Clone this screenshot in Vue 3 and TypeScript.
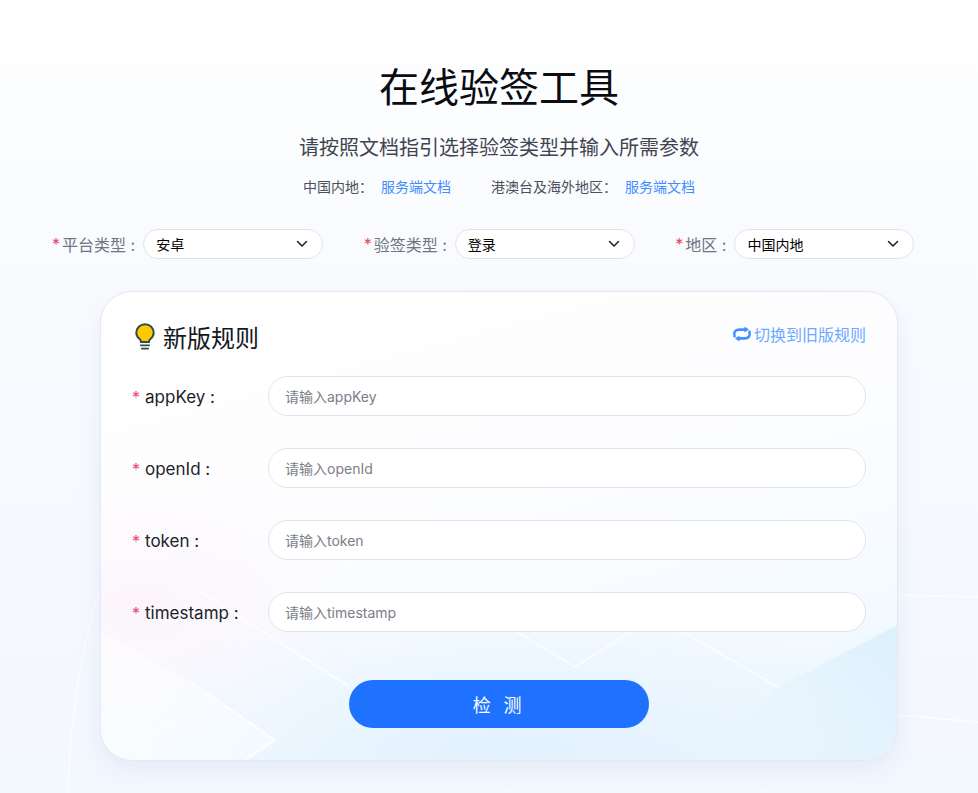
<script setup lang="ts">
const filters = [
  { label: '平台类型', value: '安卓' },
  { label: '验签类型', value: '登录' },
  { label: '地区', value: '中国内地' },
]
const fields = ['appKey', 'openId', 'token', 'timestamp']
</script>

<template>
  <div class="page">
    <svg class="page-deco" width="978" height="793" viewBox="0 0 978 793" aria-hidden="true">
      <path d="M68 793 C70 720 82 640 100 590" fill="none" stroke="#fff" stroke-width="1" opacity="0.8" />
      <path d="M898 595 L978 597" fill="none" stroke="#fff" stroke-width="1.5" opacity="0.7" />
      <path d="M898 715 L978 722" fill="none" stroke="#fff" stroke-width="1.5" opacity="0.7" />
    </svg>
    <div class="inner">
      <h1 class="title">在线验签工具</h1>
      <p class="subtitle">请按照文档指引选择验签类型并输入所需参数</p>
      <div class="docs">
        <span class="doc"><span class="doc-label">中国内地：</span><a class="doc-link">服务端文档</a></span>
        <span class="doc"><span class="doc-label">港澳台及海外地区：</span><a class="doc-link">服务端文档</a></span>
      </div>

      <div class="filters">
        <div v-for="f in filters" :key="f.label" class="filter">
          <span class="star">*</span>
          <span class="filter-label">{{ f.label }} :</span>
          <div class="select">
            <span>{{ f.value }}</span>
            <svg width="12" height="8" viewBox="0 0 12 8" aria-hidden="true">
              <path d="M1.5 1.5 L6 6 L10.5 1.5" fill="none" stroke="#1a1f2e" stroke-width="1.5" stroke-linecap="round" stroke-linejoin="round" />
            </svg>
          </div>
        </div>
      </div>

      <section class="card">
        <svg class="card-deco" width="798" height="470" viewBox="0 0 798 470" aria-hidden="true">
          <defs>
            <linearGradient id="corner" x1="1" y1="0.2" x2="0.1" y2="1">
              <stop offset="0" stop-color="#dcf0fd" stop-opacity="0.95" />
              <stop offset="1" stop-color="#e6f3fe" stop-opacity="0" />
            </linearGradient>
          </defs>
          <polygon points="678,396 798,334 798,470 610,470" fill="url(#corner)" />
          <polygon points="0,340 90,391 175,449 145,470 0,470" fill="#ffffff" opacity="0.4" />
          <g fill="none" stroke="#fff" stroke-linejoin="round">
            <path d="M97 299 L250 396" stroke-width="1.5" opacity="0.8" />
            <path d="M90 391 L175 449 L145 469" stroke-width="2" opacity="0.8" />
            <path d="M417 341 L475 376 L530 341" stroke-width="1.5" opacity="0.7" />
            <path d="M583 341 L678 396" stroke-width="1.5" opacity="0.7" />
          </g>
        </svg>
        <header class="card-head">
          <h2 class="card-title">
            <svg width="20" height="27" viewBox="0 0 20 27" aria-hidden="true">
              <path d="M10 1.2 C5 1.2 1.3 5 1.3 9.7 C1.3 12.6 2.8 14.6 4.6 16.1 C5.5 16.9 6 17.8 6 19 L14 19 C14 17.8 14.5 16.9 15.4 16.1 C17.2 14.6 18.7 12.6 18.7 9.7 C18.7 5 15 1.2 10 1.2 Z" fill="#ffc800" stroke="#2f5148" stroke-width="2" />
              <path d="M5.8 22.3 H14.2 M6.8 25.6 H13.2" stroke="#2f5148" stroke-width="1.7" stroke-linecap="round" />
            </svg>
            <span>新版规则</span>
          </h2>
          <a class="switch">
            <svg width="20" height="16" viewBox="0 0 20 16" aria-hidden="true">
              <path d="M2.6 10.2 C1.2 6.6 3.4 3.6 7 3.6 H13.5" fill="none" stroke="#3f92ff" stroke-width="2.6" stroke-linecap="round" />
              <path d="M17.4 5.8 C18.8 9.4 16.6 12.4 13 12.4 H6.5" fill="none" stroke="#3f92ff" stroke-width="2.6" stroke-linecap="round" />
              <path d="M12.5 0.6 L17 3.6 L12.5 6.6 Z M7.5 9.4 L3 12.4 L7.5 15.4 Z" fill="#3f92ff" />
            </svg>
            <span>切换到旧版规则</span>
          </a>
        </header>

        <div class="form">
          <div v-for="name in fields" :key="name" class="row">
            <label class="row-label"><span class="star row-star">*</span>{{ name }} :</label>
            <div class="input">请输入{{ name }}</div>
          </div>
        </div>

        <div class="actions">
          <button class="submit" type="button">检 测</button>
        </div>
      </section>
    </div>
  </div>
</template>

<style>
html, body { margin: 0; padding: 0; }
</style>

<style scoped>
.page {
  position: relative;
  box-sizing: border-box;
  width: 978px;
  height: 793px;
  overflow: hidden;
  background: linear-gradient(180deg, #ffffff 0%, #f9fbfe 30%, #f3f7fe 100%);
  font-family: "Inter", "Noto Sans CJK SC", sans-serif;
}
.page-deco {
  position: absolute;
  left: 0;
  top: 0;
}
.inner {
  position: relative;
  box-sizing: border-box;
  width: 978px;
  height: 793px;
  padding: 60px 0 0 20px;
  display: flex;
  flex-direction: column;
  align-items: center;
}
.title {
  margin: 0;
  font-size: 40px;
  line-height: 56px;
  font-weight: 400;
  color: #0a0c12;
}
.subtitle {
  margin: 18px 0 0;
  font-size: 20px;
  line-height: 28px;
  color: #3f4450;
}
.docs {
  margin-top: 15px;
  display: flex;
  gap: 40px;
  font-size: 14px;
  line-height: 20px;
}
.doc-label { color: #4b505c; margin-right: 8px; }
.doc-link { color: #3f8cff; }
.filters {
  align-self: flex-start;
  margin: 32px 0 0 32px;
  display: flex;
  gap: 40.5px;
}
.filter {
  display: flex;
  align-items: center;
  font-size: 16px;
  height: 30px;
}
.star {
  color: #e8476a;
  font-size: 16px;
  margin-right: 2px;
}
.row-star {
  margin-right: 5px;
}
.filter-label {
  color: #6f7480;
  margin-right: 8px;
  white-space: nowrap;
}
.select {
  box-sizing: border-box;
  width: 180px;
  height: 30px;
  border: 1px solid #e2e3e8;
  border-radius: 15px;
  background: #fff;
  padding: 0 14px 0 12px;
  display: flex;
  align-items: center;
  justify-content: space-between;
  font-size: 14px;
  color: #000;
}
.card {
  position: relative;
  box-sizing: border-box;
  width: 798px;
  height: 470px;
  margin-top: 32px;
  padding: 0 31px;
  border: 1px solid #e6e7ef;
  border-radius: 32px;
  overflow: hidden;
  background:
    radial-gradient(ellipse 220px 130px at 5% 68%, rgba(253, 240, 250, 0.55), rgba(253, 240, 250, 0)),
    radial-gradient(ellipse 420px 170px at 50% 100%, #e2f1fe, rgba(226, 241, 254, 0)),
    linear-gradient(165deg, #ffffff 0%, #fdfdff 40%, #f6fbff 70%, #e9f5fe 100%);
  box-shadow: 0 8px 24px rgba(90, 130, 200, 0.1);
}
.card-deco {
  position: absolute;
  left: -1px;
  top: -1px;
}
.card-head {
  position: relative;
  display: flex;
  align-items: center;
  justify-content: space-between;
  height: 84px;
  padding-top: 4px;
  box-sizing: border-box;
}
.card-title {
  margin: 0 0 0 3px;
  display: flex;
  align-items: center;
  gap: 8px;
  font-size: 24px;
  font-weight: 400;
  color: #14171f;
}
.switch {
  display: flex;
  align-items: center;
  gap: 2px;
  font-size: 16px;
  color: #6ea8ff;
  margin-top: -4px;
}
.form {
  position: relative;
  display: flex;
  flex-direction: column;
  gap: 32px;
}
.row {
  display: flex;
  align-items: center;
  height: 40px;
}
.row-label {
  width: 136px;
  font-size: 17px;
  color: #1b1e2a;
  white-space: nowrap;
  padding-top: 2px;
}
.input {
  box-sizing: border-box;
  flex: 1;
  height: 40px;
  border: 1px solid #e2e3e8;
  border-radius: 20px;
  background: #fff;
  padding: 0 16px;
  display: flex;
  align-items: center;
  font-size: 14px;
  color: #7a7e88;
}
.actions {
  position: relative;
  display: flex;
  justify-content: center;
  margin-top: 48px;
}
.submit {
  width: 300px;
  height: 48px;
  border: 0;
  border-radius: 24px;
  background: #1e72ff;
  color: #fff;
  font-family: inherit;
  font-size: 18px;
  letter-spacing: 3.8px;
}
</style>
